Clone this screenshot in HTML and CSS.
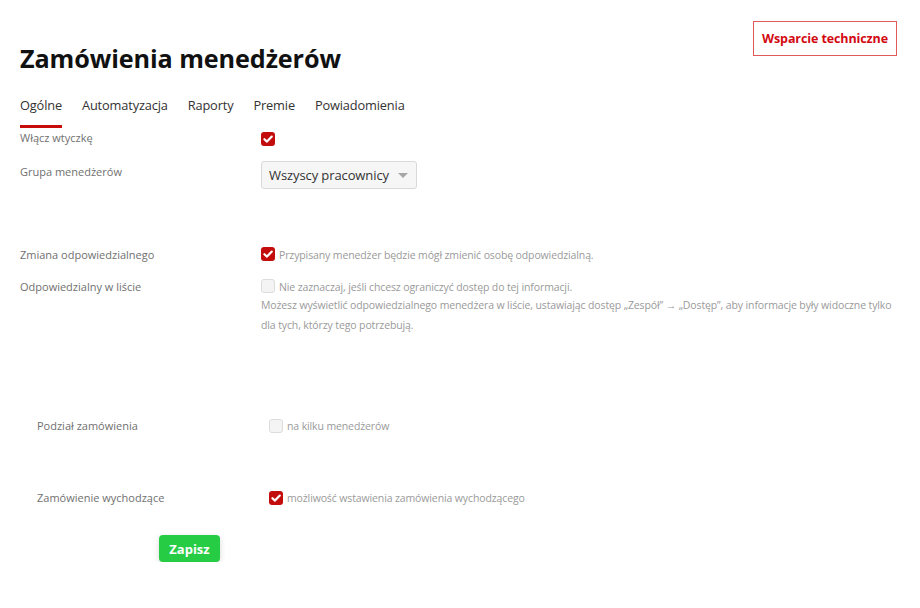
FILE: index.html
```html
<!DOCTYPE html>
<html lang="pl">
<head>
<meta charset="utf-8">
<title>Zamówienia menedżerów</title>
<link rel="stylesheet" href="styles.css">
</head>
<body>
<div class="page">
  <header class="header">
    <h1 class="title">Zamówienia menedżerów</h1>
    <a class="support" href="#">Wsparcie techniczne</a>
  </header>
  <nav class="tabs">
    <a class="tab active" href="#">Ogólne</a>
    <a class="tab" href="#">Automatyzacja</a>
    <a class="tab" href="#">Raporty</a>
    <a class="tab" href="#">Premie</a>
    <a class="tab" href="#">Powiadomienia</a>
  </nav>

  <div class="form">
    <div class="row r-enable">
      <div class="label">Włącz wtyczkę</div>
      <div class="control"><span class="cb on"><svg viewBox="0 0 14 14"><path d="M3.4 7.2 L6 9.6 L10.8 4.6" /></svg></span></div>
    </div>
    <div class="row r-group">
      <div class="label">Grupa menedżerów</div>
      <div class="control">
        <div class="select">Wszyscy pracownicy<span class="arrow"></span></div>
      </div>
    </div>
    <div class="row r-change">
      <div class="label">Zmiana odpowiedzialnego</div>
      <div class="control">
        <div class="line"><span class="cb on"><svg viewBox="0 0 14 14"><path d="M3.4 7.2 L6 9.6 L10.8 4.6" /></svg></span><span class="help">Przypisany menedżer będzie mógł zmienić osobę odpowiedzialną.</span></div>
      </div>
    </div>
    <div class="row r-list">
      <div class="label">Odpowiedzialny w liście</div>
      <div class="control">
        <div class="line"><span class="cb off"></span><span class="help">Nie zaznaczaj, jeśli chcesz ograniczyć dostęp do tej informacji.</span></div>
        <p class="help block">Możesz wyświetlić odpowiedzialnego menedżera w liście, ustawiając dostęp „Zespół” → „Dostęp”, aby informacje były widoczne tylko dla tych, którzy tego potrzebują.</p>
      </div>
    </div>
  </div>

  <div class="form2">
    <div class="row2 r-split">
      <div class="label">Podział zamówienia</div>
      <div class="line"><span class="cb off"></span><span class="help">na kilku menedżerów</span></div>
    </div>
    <div class="row2 r-out">
      <div class="label">Zamówienie wychodzące</div>
      <div class="line"><span class="cb on"><svg viewBox="0 0 14 14"><path d="M3.4 7.2 L6 9.6 L10.8 4.6" /></svg></span><span class="help">możliwość wstawienia zamówienia wychodzącego</span></div>
    </div>
    <div class="actions"><button class="save" type="button">Zapisz</button></div>
  </div>
</div>
</body>
</html>
```

FILE: styles.css
```css
* { box-sizing: border-box; }
html, body { margin: 0; padding: 0; background: #fff; }
body {
  font-family: "Open Sans", "Noto Sans", "Liberation Sans", sans-serif;
  color: #333;
}
.page { padding: 21px 23px 0 20px; }

.header {
  display: flex;
  justify-content: space-between;
  align-items: flex-start;
}
.title {
  margin: 20px 0 0 0;
  font-size: 25.2px;
  font-weight: 700;
  color: #111;
  line-height: 34px;
  letter-spacing: -0.1px;
}
.support {
  display: block;
  height: 35px;
  padding: 0 8px;
  line-height: 33px;
  border: 1px solid #e05a5a;
  color: #d20a10;
  font-weight: 700;
  font-size: 12.5px;
  text-decoration: none;
  letter-spacing: -0.1px;
}

.tabs {
  display: flex;
  gap: 20px;
  margin-top: 20px;
}
.tab {
  font-size: 12.8px;
  color: #333;
  text-decoration: none;
  line-height: 20px;
  padding-bottom: 10px;
  border-bottom: 3px solid transparent;
  letter-spacing: -0.15px;
}
.tab.active { border-bottom-color: #c80b0b; }

.form { margin-top: 1px; }
.row {
  display: grid;
  grid-template-columns: 241px 1fr;
}
.label {
  font-size: 11px;
  color: #707070;
  line-height: 18px;
}
.r-enable { padding-top: 0; }
.r-group { margin-top: 12px; }
.r-change { margin-top: 57px; }
.r-list { margin-top: 14px; }

.cb {
  display: inline-flex;
  width: 14px;
  height: 14px;
  border-radius: 3px;
  flex: none;
  align-items: center;
  justify-content: center;
}
.cb svg { width: 14px; height: 14px; }
.cb svg path { fill: none; stroke: #fff; stroke-width: 2.2; stroke-linecap: round; stroke-linejoin: round; }
.cb.on { background: #c30d0d; }
.cb.off { background: #f4f4f4; border: 1px solid #dcdcdc; }
.control .cb { margin-top: 1px; }

.select {
  display: inline-flex;
  align-items: center;
  height: 28px;
  width: 156px;
  padding: 0 7px;
  border: 1px solid #d9d9d9;
  border-radius: 3px;
  background: #f6f6f6;
  font-size: 13px;
  color: #333;
  position: relative;
  margin-top: -2px;
  letter-spacing: -0.1px;
}
.arrow {
  position: absolute;
  right: 8px;
  top: 11px;
  width: 0; height: 0;
  border-left: 5px solid transparent;
  border-right: 5px solid transparent;
  border-top: 5px solid #a6a6a6;
}

.line {
  display: flex;
  align-items: flex-start;
  gap: 4px;
}
.help {
  font-size: 10.5px;
  color: #9a9a9a;
  line-height: 18px;
  letter-spacing: -0.12px;
}
.help.block {
  margin: 0;
  line-height: 19.5px;
}

.form2 { margin-top: 82px; padding-left: 17px; }
.row2 {
  display: grid;
  grid-template-columns: 232px 1fr;
}
.row2 .cb { margin-top: 2px; }
.r-out { margin-top: 54px; }

.actions { margin-top: 28px; padding-left: 122px; }
.save {
  font-family: inherit;
  height: 27px;
  width: 61px;
  border: none;
  border-radius: 4px;
  background: #27cc45;
  color: #fff;
  font-weight: 700;
  font-size: 13px;
  box-shadow: 0 2px 6px rgba(0,0,0,0.15);
  padding: 0;
}
```
